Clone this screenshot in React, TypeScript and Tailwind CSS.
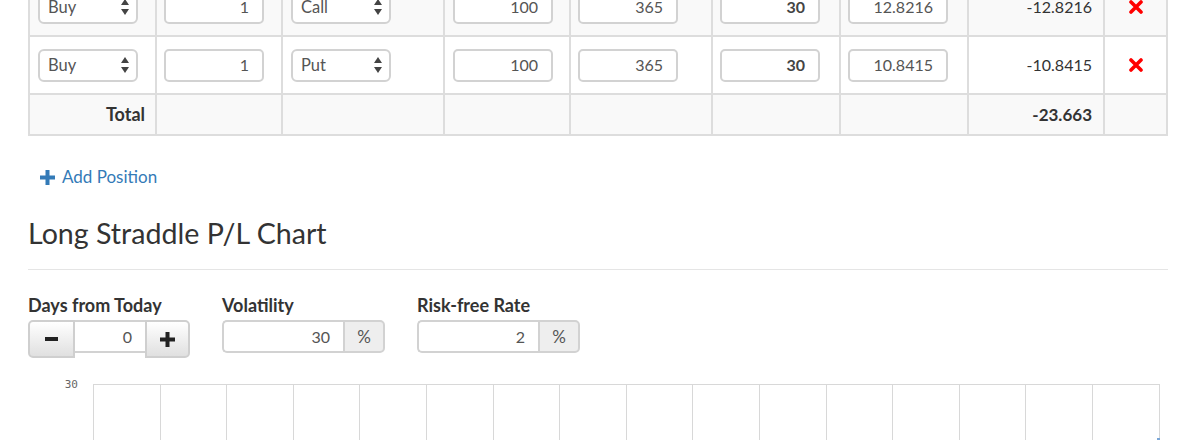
import React from "react";

const rows = [
  { side: "Buy", qty: "1", type: "Call", strike: "100", days: "365", vol: "30", price: "12.8216", value: "-12.8216", bg: "bg-[#f9f9f9]" },
  { side: "Buy", qty: "1", type: "Put", strike: "100", days: "365", vol: "30", price: "10.8415", value: "-10.8415", bg: "bg-white" },
];

function Arrows() {
  return (
    <svg width="8" height="17" viewBox="0 0 8 17" className="shrink-0">
      <path d="M4 0 L8 6 L0 6 Z" fill="#444" />
      <path d="M0 10 L8 10 L4 16 Z" fill="#444" />
    </svg>
  );
}

function Select({ label }: { label: string }) {
  return (
    <div className="w-[100px] h-[33px] border-2 border-[#d2d2d2] rounded-[6px] bg-white flex items-center justify-between pl-[8px] pr-[7px] text-[#555] text-[16.5px]">
      <span>{label}</span>
      <Arrows />
    </div>
  );
}

function Input({ value, bold }: { value: string; bold?: boolean }) {
  return (
    <div
      className={
        "w-[100px] h-[33px] border-2 border-[#d2d2d2] rounded-[5px] bg-white flex items-center justify-end pr-[13px] text-[16px] " +
        (bold ? "font-bold text-[#444]" : "text-[#555]")
      }
    >
      {value}
    </div>
  );
}

function XIcon() {
  return (
    <svg width="14" height="14" viewBox="0 0 14 14">
      <path d="M2 2 L12 12 M12 2 L2 12" stroke="#ff0000" strokeWidth="3.6" strokeLinecap="round" />
    </svg>
  );
}

const cell = "border-l-2 border-t-2 border-[#dddddd] flex items-center";

export default function App() {
  return (
    <div className="w-[1196px] h-[440px] overflow-hidden bg-white font-['Lato',sans-serif] text-[#333]">
      <div className="w-[1140px] mx-auto">
        {/* Table */}
        <div className="-mt-[23px] grid grid-cols-[127px_126px_162px_126px_142px_128px_128px_136px_63px] border-r-2 border-b-2 border-[#dddddd]">
          {rows.map((r, i) => (
            <React.Fragment key={i}>
              <div className={`${cell} ${r.bg} h-[58px] pl-[8px]`}><Select label={r.side} /></div>
              <div className={`${cell} ${r.bg} h-[58px] pl-[7px]`}><Input value={r.qty} /></div>
              <div className={`${cell} ${r.bg} h-[58px] pl-[8px]`}><Select label={r.type} /></div>
              <div className={`${cell} ${r.bg} h-[58px] pl-[8px]`}><Input value={r.strike} /></div>
              <div className={`${cell} ${r.bg} h-[58px] pl-[7px]`}><Input value={r.days} /></div>
              <div className={`${cell} ${r.bg} h-[58px] pl-[7px]`}><Input value={r.vol} bold /></div>
              <div className={`${cell} ${r.bg} h-[58px] pl-[7px]`}><Input value={r.price} /></div>
              <div className={`${cell} ${r.bg} h-[58px] justify-end pr-[11px] text-[16px] text-[#333]`}>{r.value}</div>
              <div className={`${cell} ${r.bg} h-[58px] justify-center`}><XIcon /></div>
            </React.Fragment>
          ))}
          <div className={`${cell} bg-[#f9f9f9] h-[41px] justify-end pr-[10px] font-bold text-[18px]`}>Total</div>
          <div className={`${cell} bg-[#f9f9f9] h-[41px]`} />
          <div className={`${cell} bg-[#f9f9f9] h-[41px]`} />
          <div className={`${cell} bg-[#f9f9f9] h-[41px]`} />
          <div className={`${cell} bg-[#f9f9f9] h-[41px]`} />
          <div className={`${cell} bg-[#f9f9f9] h-[41px]`} />
          <div className={`${cell} bg-[#f9f9f9] h-[41px]`} />
          <div className={`${cell} bg-[#f9f9f9] h-[41px] justify-end pr-[11px] font-bold text-[17px]`}>-23.663</div>
          <div className={`${cell} bg-[#f9f9f9] h-[41px]`} />
        </div>

        {/* Add position */}
        <div className="mt-[23px] h-[36px] flex items-center pl-[12px] text-[#337ab7] text-[17px] gap-[7px]">
          <svg width="15" height="15" viewBox="0 0 15 15">
            <path d="M5.5 0 H9.5 V5.5 H15 V9.5 H9.5 V15 H5.5 V9.5 H0 V5.5 H5.5 Z" fill="#337ab7" />
          </svg>
          <span>Add Position</span>
        </div>

        {/* Heading */}
        <h2 className="mt-[21px] text-[28.6px] leading-[34px] font-normal text-[#333]">Long Straddle P/L Chart</h2>
        <div className="mt-[19px] h-px bg-[#e5e5e5]" />

        {/* Controls */}
        <div className="mt-[24px] flex gap-[32px]">
          <div className="flex flex-col">
            <div className="font-bold text-[18px] leading-[22px] text-[#333]">Days from Today</div>
            <div className="mt-[4px] flex items-start">
              <div className="w-[47px] h-[38px] border-2 border-[#cfcfcf] rounded-l-[5px] bg-gradient-to-b from-white to-[#e0e0e0] flex items-center justify-center">
                <div className="w-[13px] h-[4px] bg-[#222]" />
              </div>
              <div className="w-[70px] h-[33px] border-y-2 border-[#d2d2d2] bg-white flex items-center justify-end pr-[13px] text-[16px] text-[#555]">0</div>
              <div className="w-[45px] h-[38px] border-2 border-[#cfcfcf] rounded-r-[5px] bg-gradient-to-b from-white to-[#e0e0e0] flex items-center justify-center">
                <svg width="15" height="15" viewBox="0 0 15 15">
                  <path d="M5.5 0 H9.5 V5.5 H15 V9.5 H9.5 V15 H5.5 V9.5 H0 V5.5 H5.5 Z" fill="#222" />
                </svg>
              </div>
            </div>
          </div>
          <div className="flex flex-col">
            <div className="font-bold text-[18px] leading-[22px] text-[#333]">Volatility</div>
            <div className="mt-[4px] flex">
              <div className="w-[121px] h-[33px] border-2 border-r-0 border-[#d2d2d2] rounded-l-[5px] bg-white flex items-center justify-end pr-[13px] text-[16px] text-[#555]">30</div>
              <div className="w-[42px] h-[33px] border-2 border-[#d2d2d2] rounded-r-[5px] bg-[#eeeeee] flex items-center justify-center text-[17px] text-[#555]">%</div>
            </div>
          </div>
          <div className="flex flex-col">
            <div className="font-bold text-[18px] leading-[22px] text-[#333]">Risk-free Rate</div>
            <div className="mt-[4px] flex">
              <div className="w-[121px] h-[33px] border-2 border-r-0 border-[#d2d2d2] rounded-l-[5px] bg-white flex items-center justify-end pr-[13px] text-[16px] text-[#555]">2</div>
              <div className="w-[42px] h-[33px] border-2 border-[#d2d2d2] rounded-r-[5px] bg-[#eeeeee] flex items-center justify-center text-[17px] text-[#555]">%</div>
            </div>
          </div>
        </div>

        {/* Chart */}
        <div className="mt-[26px] flex">
          <div className="w-[65px] pr-[15px] text-right text-[11px] leading-[11px] text-[#666] font-['DejaVu_Sans_Mono',monospace] -mt-[5px]">30</div>
          <svg width="1067" height="120" className="block">
            <line x1="0" y1="0.5" x2="1066" y2="0.5" stroke="#d8d8d8" />
            {Array.from({ length: 17 }).map((_, i) => {
              const x = Math.round(i * 66.6) + 0.5;
              return <line key={i} x1={x} y1="0" x2={x} y2="120" stroke="#d8d8d8" />;
            })}
            <rect x="1064" y="54" width="3" height="2" fill="#7aa6d6" />
          </svg>
        </div>
      </div>
    </div>
  );
}
